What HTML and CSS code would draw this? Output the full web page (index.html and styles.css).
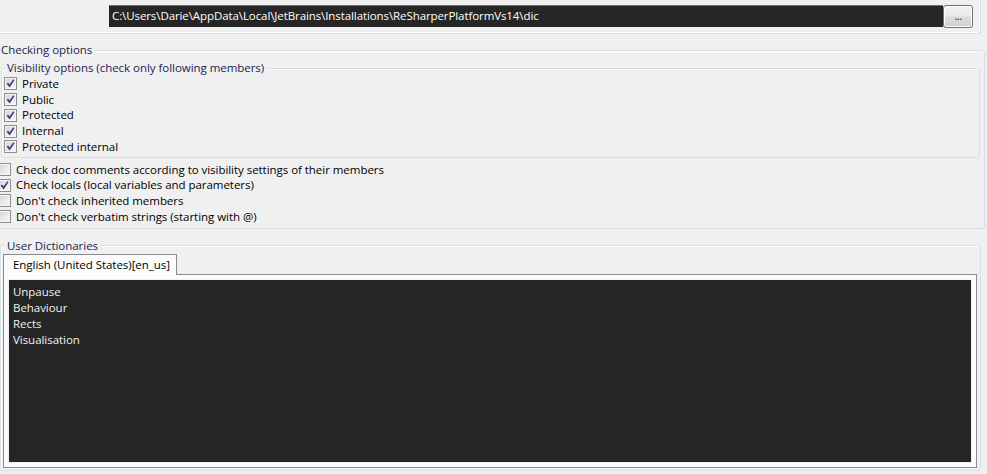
FILE: index.html
```html
<!DOCTYPE html>
<html lang="en">
<head>
<meta charset="utf-8">
<title>Spell checking options</title>
<link rel="stylesheet" href="styles.css">
</head>
<body>
<div class="top-panel">
  <div class="path-box">C:\Users\Darie\AppData\Local\JetBrains\Installations\ReSharperPlatformVs14\dic</div>
  <button class="browse" type="button">...</button>
</div>

<fieldset class="group group-checking">
  <legend>Checking options</legend>
  <fieldset class="group group-visibility">
    <legend>Visibility options (check only following members)</legend>
    <div class="check-list inner-list">
      <div class="check"><span class="box checked"><svg viewBox="0 0 13 13" width="13" height="13"><path d="M2.6 6.4 L4.2 5.6 L5.4 7.6 L9.4 2.2 L10.6 3.1 L5.6 10.4 Z"/></svg></span>Private</div>
      <div class="check"><span class="box checked"><svg viewBox="0 0 13 13" width="13" height="13"><path d="M2.6 6.4 L4.2 5.6 L5.4 7.6 L9.4 2.2 L10.6 3.1 L5.6 10.4 Z"/></svg></span>Public</div>
      <div class="check"><span class="box checked"><svg viewBox="0 0 13 13" width="13" height="13"><path d="M2.6 6.4 L4.2 5.6 L5.4 7.6 L9.4 2.2 L10.6 3.1 L5.6 10.4 Z"/></svg></span>Protected</div>
      <div class="check"><span class="box checked"><svg viewBox="0 0 13 13" width="13" height="13"><path d="M2.6 6.4 L4.2 5.6 L5.4 7.6 L9.4 2.2 L10.6 3.1 L5.6 10.4 Z"/></svg></span>Internal</div>
      <div class="check"><span class="box checked"><svg viewBox="0 0 13 13" width="13" height="13"><path d="M2.6 6.4 L4.2 5.6 L5.4 7.6 L9.4 2.2 L10.6 3.1 L5.6 10.4 Z"/></svg></span>Protected internal</div>
    </div>
  </fieldset>
  <div class="check-list outer-list">
    <div class="check"><span class="box"></span>Check doc comments according to visibility settings of their members</div>
    <div class="check"><span class="box checked"><svg viewBox="0 0 13 13" width="13" height="13"><path d="M2.6 6.4 L4.2 5.6 L5.4 7.6 L9.4 2.2 L10.6 3.1 L5.6 10.4 Z"/></svg></span>Check locals (local variables and parameters)</div>
    <div class="check"><span class="box"></span>Don't check inherited members</div>
    <div class="check"><span class="box"></span>Don't check verbatim strings (starting with @)</div>
  </div>
</fieldset>

<fieldset class="group group-dict">
  <legend>User Dictionaries</legend>
  <div class="tabs">
    <div class="tab">English (United States)[en_us]</div>
  </div>
  <div class="tab-page">
    <div class="dict-text">
      <div>Unpause</div>
      <div>Behaviour</div>
      <div>Rects</div>
      <div>Visualisation</div>
    </div>
  </div>
</fieldset>
</body>
</html>
```
FILE: styles.css
```css
* { box-sizing: border-box; }

html {
  margin: 0;
  overflow: hidden;
  background: #f0f0f0;
}

body {
  margin: 0;
  width: 987px;
  height: 474px;
  overflow: hidden;
  background: #f0f0f0;
  font-family: "Segoe UI", "Open Sans", "Noto Sans", sans-serif;
  font-size: 11.5px;
  line-height: 16px;
  letter-spacing: -0.04px;
  color: #000;
}

/* ---------- top panel with path ---------- */
.top-panel {
  display: flex;
  align-items: flex-start;
  width: 981px;
  height: 34px;
  padding: 5px 0 0 109px;
  border-right: 1px solid #d5dfe5;
  border-bottom: 1px solid #d5dfe5;
  border-bottom-right-radius: 3px;
  box-shadow: inset -1px -1px 0 #fff;
}

.path-box {
  width: 834px;
  height: 22px;
  flex: none;
  padding: 2px 3px;
  background: #262626;
  border-top: 1px solid #6e6e6e;
  color: #fff;
  letter-spacing: -0.09px;
  white-space: nowrap;
  overflow: hidden;
}

.browse {
  width: 30px;
  height: 23px;
  flex: none;
  margin: 0;
  padding: 0 0 2px;
  border: 1px solid #707070;
  border-radius: 3px;
  background: linear-gradient(#f2f2f2 0%, #ebebeb 48%, #dddddd 52%, #cfcfcf 100%);
  box-shadow: inset 0 0 0 1px #fcfcfc;
  font: inherit;
  font-size: 11px;
  line-height: 12px;
  color: #1b1b1b;
  letter-spacing: -0.5px;
}

/* ---------- group boxes ---------- */
.group {
  margin: 0;
  padding: 0;
  min-inline-size: 0;
  border: 1px solid #d5dfe5;
  border-radius: 3px;
  box-shadow: inset 1px 1px 0 #fff;
}

.group > legend {
  padding: 0 2px;
  line-height: 16px;
  color: #1a2450;
  background: #f0f0f0;
}

.group-checking {
  width: 989px;
  margin: 8px 0 0 -4px;
}
.group-checking > legend { margin-left: 2px; }

.group-visibility {
  width: 979px;
  margin: 2px 0 0 4px;
  padding-bottom: 2px;
}
.group-visibility > legend { margin-left: 3px; }

.group-dict {
  width: 981px;
  margin: 9px 0 0 0;
  padding: 0 0 2px 1px;
}
.group-dict > legend { margin-left: 3px; }

/* ---------- checkboxes ---------- */
.check-list { display: flex; flex-direction: column; }
.inner-list { padding-left: 2px; }
.inner-list .check { height: 15.75px; }
.outer-list { margin-top: 4px; padding: 0 0 3px 1px; }
.outer-list .check { height: 15.7px; }

.check {
  display: flex;
  align-items: center;
  white-space: nowrap;
}

.box {
  width: 13px;
  height: 13px;
  flex: none;
  margin-right: 5px;
  border: 1px solid #8e8f8f;
  background: linear-gradient(135deg, #cfd1d4 0%, #e8e9ea 50%, #f7f7f7 100%);
  box-shadow: inset 0 0 0 1px #f4f4f4;
}

.box svg {
  display: block;
  margin: -1px;
}

.box svg path { fill: #33407d; }

/* ---------- dictionary tabs ---------- */
.tabs {
  display: flex;
  padding-left: 1px;
}

.tab {
  position: relative;
  z-index: 1;
  width: 174px;
  height: 21px;
  margin-bottom: -1px;
  padding: 2px 4px 0 9px;
  border: 1px solid #898c95;
  border-bottom: none;
  background: #fcfcfc;
  white-space: nowrap;
}

.tab-page {
  width: 974px;
  height: 194px;
  margin-left: 1px;
  padding: 5px;
  border: 1px solid #898c95;
  background: #fcfcfc;
}

.dict-text {
  height: 100%;
  padding: 4px;
  background: #252525;
  color: #f2f2f2;
  box-shadow: 0 0 0 1px #eef2f6;
}
```
